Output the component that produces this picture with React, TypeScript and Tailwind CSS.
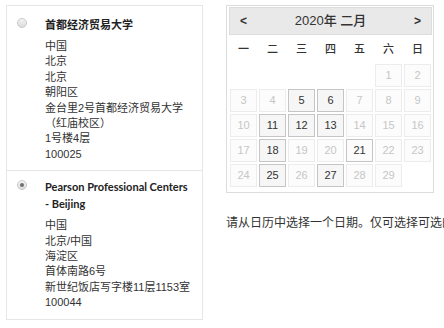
import React from "react";

const FONT = { fontFamily: '"Liberation Sans", "Noto Sans CJK SC", sans-serif' };
const TITLE_FONT = { fontFamily: 'Lato, "Noto Sans CJK SC", sans-serif' };

function Radio({ checked }: { checked?: boolean }) {
  return (
    <div className="mt-[2px] w-[10px] h-[10px] shrink-0 rounded-full border border-[#c9c9c9] bg-gradient-to-b from-[#f4f4f4] to-[#dcdcdc] flex items-center justify-center">
      {checked && <div className="w-[4px] h-[4px] rounded-full bg-[#707070]" />}
    </div>
  );
}

function Item({
  title,
  lines,
  checked,
  pt,
  last,
}: {
  title: React.ReactNode;
  lines: string[];
  checked?: boolean;
  pt: string;
  last?: boolean;
}) {
  return (
    <div className={`flex items-start pl-[10px] pb-[8px] ${pt} ${last ? "" : "border-b border-[#e6e6e6]"}`}>
      <Radio checked={checked} />
      <div className="ml-[18px] text-[11px] text-[#333]">
        <div className="font-bold leading-[17px] text-[#222]" style={TITLE_FONT}>
          {title}
        </div>
        <div className="mt-[6px] leading-[15.4px]">
          {lines.map((l, i) => (
            <div key={i}>{l}</div>
          ))}
        </div>
      </div>
    </div>
  );
}

const enabled = new Set([5, 6, 11, 12, 13, 18, 21, 25, 27]);

export default function App() {
  const cells: (number | null)[] = [null, null, null, null, null];
  for (let d = 1; d <= 29; d++) cells.push(d);
  const weekdays = ["一", "二", "三", "四", "五", "六", "日"];

  return (
    <div className="w-[444px] h-[328px] overflow-hidden bg-white flex items-start pt-[5px] pl-[6px]" style={FONT}>
      <div className="w-[197px] shrink-0 border border-[#e6e6e6]">
        <Item
          pt="pt-[10px]"
          title="首都经济贸易大学"
          lines={["中国", "北京", "北京", "朝阳区", "金台里2号首都经济贸易大学", "（红庙校区）", "1号楼4层", "100025"]}
        />
        <Item
          pt="pt-[7px]"
          checked
          last
          title={
            <>
              Pearson Professional Centers
              <br />- Beijing
            </>
          }
          lines={["中国", "北京/中国", "海淀区", "首体南路6号", "新世纪饭店写字楼11层1153室", "100044"]}
        />
      </div>

      <div className="ml-[23px] w-[208px] shrink-0">
        <div className="w-[208px] border border-[#dcdcdc] p-[1px] pb-[5px]">
          <div className="ml-[1px] w-[203px] h-[28px] bg-[#e9e9e9] border border-[#dddddd] flex items-center justify-between px-[10px] text-[#333]">
            <span className="text-[12px] font-bold">&lt;</span>
            <span className="text-[13px] font-medium">2020年 二月</span>
            <span className="text-[12px] font-bold">&gt;</span>
          </div>
          <div className="ml-[2px] grid grid-cols-[repeat(7,27px)] gap-x-[2px] h-[29px] items-center">
            {weekdays.map((w) => (
              <div key={w} className="text-center text-[11px] font-medium text-[#333]">
                {w}
              </div>
            ))}
          </div>
          <div className="ml-[2px] grid grid-cols-[repeat(7,27px)] auto-rows-[23px] gap-x-[2px] gap-y-[2px]">
            {cells.map((d, i) =>
              d === null ? (
                <div key={i} />
              ) : enabled.has(d) ? (
                <div
                  key={i}
                  className={`flex items-center justify-center text-[11px] text-[#333] border border-[#c5c5c5] ${
                    d === 21 ? "bg-[#fbfbfb]" : "bg-[#f6f6f6]"
                  }`}
                >
                  {d}
                </div>
              ) : (
                <div
                  key={i}
                  className="flex items-center justify-center text-[11px] text-[#c6c6c6] border border-[#ececec] bg-[#fcfcfc]"
                >
                  {d}
                </div>
              )
            )}
          </div>
        </div>
        <div className="mt-[23px] w-[218px] overflow-hidden whitespace-nowrap text-[12px] leading-[15px] text-[#333]">
          请从日历中选择一个日期。仅可选择可选的日期。
        </div>
      </div>
    </div>
  );
}
